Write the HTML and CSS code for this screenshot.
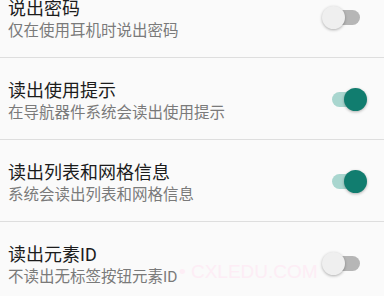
FILE: index.html
```html
<!DOCTYPE html>
<html lang="zh-CN">
<head>
    <meta charset="UTF-8">
    <meta name="viewport" content="width=device-width, initial-scale=1.0">
    <title>无障碍设置</title>
    <link rel="stylesheet" href="styles.css">
</head>
<body>
    <div class="list">
        <div class="item">
            <div class="text">
                <div class="title">说出密码</div>
                <div class="summary">仅在使用耳机时说出密码</div>
            </div>
            <div class="switch"><div class="track"></div><div class="thumb"></div></div>
        </div>
        <div class="item">
            <div class="text">
                <div class="title">读出使用提示</div>
                <div class="summary">在导航器件系统会读出使用提示</div>
            </div>
            <div class="switch on"><div class="track"></div><div class="thumb"></div></div>
        </div>
        <div class="item">
            <div class="text">
                <div class="title">读出列表和网格信息</div>
                <div class="summary">系统会读出列表和网格信息</div>
            </div>
            <div class="switch on"><div class="track"></div><div class="thumb"></div></div>
        </div>
        <div class="item">
            <div class="text">
                <div class="title">读出元素ID</div>
                <div class="summary">不读出无标签按钮元素ID</div>
            </div>
            <div class="switch"><div class="track"></div><div class="thumb"></div></div>
        </div>
    </div>
    <div class="watermark">• CXLEDU.COM</div>
</body>
</html>
```

FILE: styles.css
```css
html, body {
    margin: 0;
    height: 100%;
    overflow: hidden;
}
body {
    font-family: Roboto, "Noto Sans CJK SC", sans-serif;
    background-color: #fafafa;
    position: relative;
}
.list {
    margin-top: -24px;
}
.item {
    display: flex;
    align-items: center;
    height: 82px;
    padding: 2px 16px 0 8px;
    box-sizing: border-box;
    border-bottom: 1px solid #dedede;
}
.text {
    flex: 1;
    padding-top: 5px;
}
.title {
    font-size: 18px;
    line-height: 22px;
    color: #1c1c1c;
}
.summary {
    font-size: 15.5px;
    line-height: 22px;
    color: #7a7a7a;
}
.switch {
    position: relative;
    width: 46px;
    height: 24px;
    margin-top: -2px;
}
.track {
    position: absolute;
    left: 10px;
    top: 5px;
    width: 28px;
    height: 15px;
    border-radius: 8px;
    background-color: #b6b6b6;
}
.thumb {
    position: absolute;
    left: 0;
    top: 1px;
    width: 23px;
    height: 23px;
    border-radius: 50%;
    background-color: #efefef;
    box-shadow: 0 1px 3px rgba(0, 0, 0, 0.3);
}
.switch.on .track {
    background-color: #a9d6cf;
}
.switch.on .thumb {
    left: 22px;
    background-color: #117d6f;
}
.watermark {
    position: absolute;
    left: 179px;
    top: 261px;
    font-family: "Liberation Sans", sans-serif;
    font-size: 19px;
    color: #fdedf5;
}
```
